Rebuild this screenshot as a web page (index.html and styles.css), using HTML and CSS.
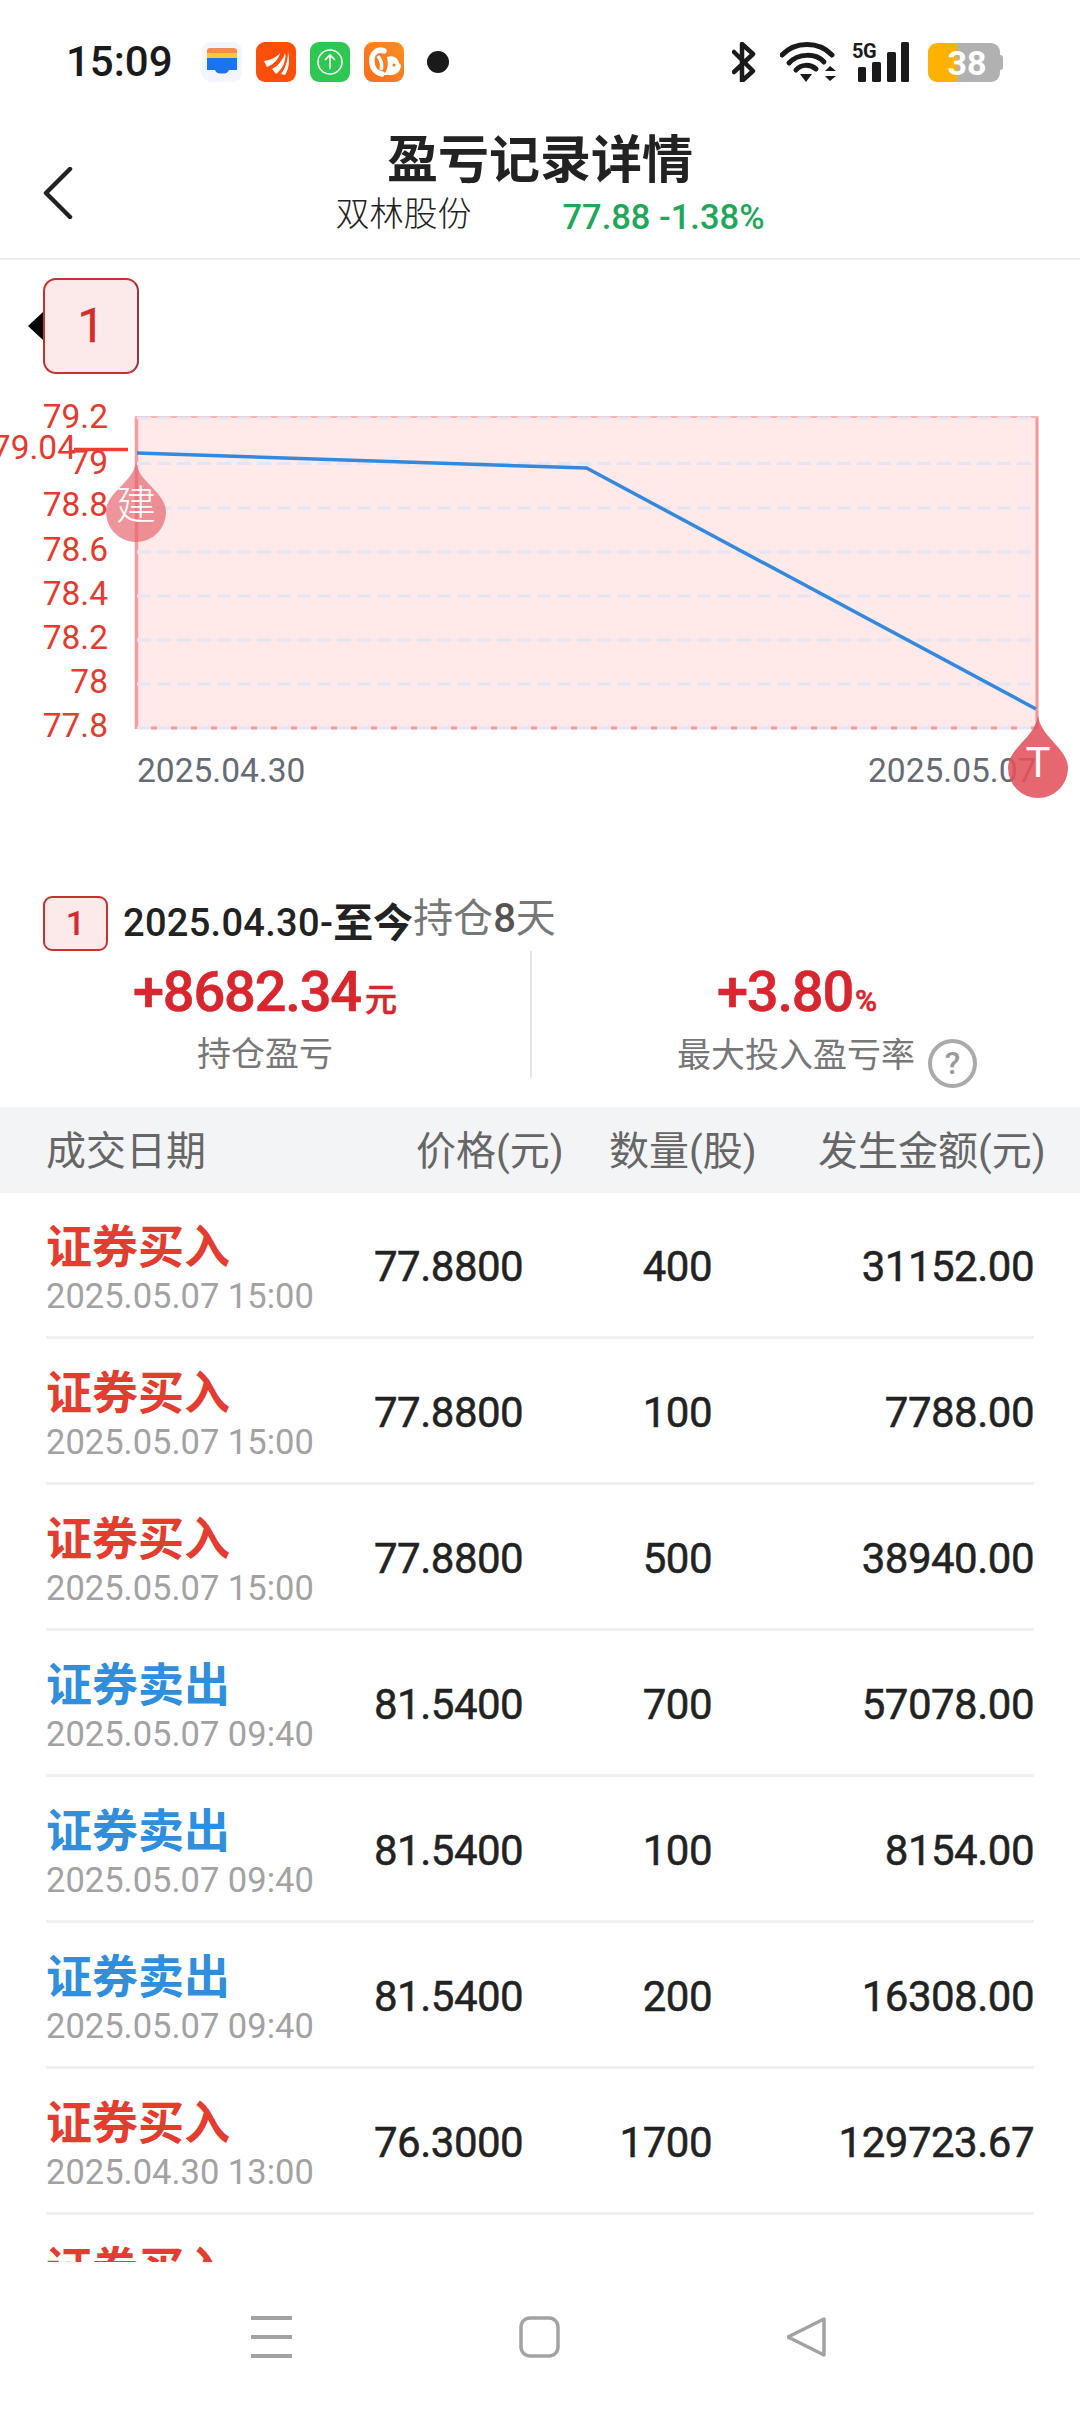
FILE: index.html
```html
<!DOCTYPE html>
<html lang="zh-CN">

<head>
    <meta charset="UTF-8">
    <meta name="viewport" content="width=device-width, initial-scale=1.0">
    <title>盈亏记录详情</title>
    <link rel="stylesheet" href="styles.css">
</head>

<body>
    <div class="page">
        <div class="status-bar">
            <span class="time">15:09</span>
            <div class="app-icons">
                <svg class="app-icon" viewBox="0 0 40 40">
                    <rect width="40" height="40" rx="9" fill="#f2f6fc" />
                    <path d="M5 9a3 3 0 0 1 3-3h24a3 3 0 0 1 3 3v2H5z" fill="#f58b4c" />
                    <rect x="5" y="11" width="30" height="5" fill="#fbc63e" />
                    <path d="M5 16h30v12H27c-1 3-4 3.500-7 3.500S14 31 13 28H5z" fill="#1b74ee" />
                </svg>
                <svg class="app-icon" viewBox="0 0 40 40">
                    <rect width="40" height="40" rx="9" fill="#ff4d0a" />
                    <path d="M8 19c7-1 13-4 16-8-1 6-7 12-13 14z" fill="#fff" />
                    <path d="M16 27c6-3 11-9 13-16 2 7-3 17-9 21z" fill="#fff" />
                    <path d="M25 32c4-5 7-13 7-22 2 8 1 17-3 23z" fill="#fff" />
                </svg>
                <svg class="app-icon" viewBox="0 0 40 40">
                    <rect width="40" height="40" rx="9" fill="#2ec752" />
                    <circle cx="20" cy="20" r="12" fill="none" stroke="#fff" stroke-width="1.600" />
                    <path d="M20 27V13M15 18l5-5 5 5" fill="none" stroke="#fff" stroke-width="1.600" />
                </svg>
                <svg class="app-icon" viewBox="0 0 40 40">
                    <defs>
                        <linearGradient id="ucBg" x1="0" y1="1" x2="1" y2="0">
                            <stop offset="0" stop-color="#fb6c1c" />
                            <stop offset="1" stop-color="#fb8e22" />
                        </linearGradient>
                    </defs>
                    <rect width="40" height="40" rx="9" fill="url(#ucBg)" />
                    <path d="M20 9C13 6 7 12 8 20c0 7 5 11 10 12" fill="none" stroke="#fff" stroke-width="5.500" stroke-linecap="round" />
                    <path d="M14 14c3 4 5 8 3 14" fill="none" stroke="#fff" stroke-width="3.500" />
                    <path d="M23 15c6-2 11 1 12 6l2 2c0 7-6 11-13 10h-5c4-3 6-10 4-18z" fill="#fff" />
                    <circle cx="30" cy="23" r="1.500" fill="#fb7a1c" />
                </svg>
                <span class="dot"></span>
            </div>
            <div class="sys-icons">
                <svg class="ic-bluetooth" viewBox="0 0 24 40">
                    <path d="M2 10l19 19-11 10V2l11 10L2 30" fill="none" stroke="#1a1a1a" stroke-width="4.500" stroke-linejoin="round" stroke-linecap="round" />
                </svg>
                <svg class="ic-wifi" viewBox="0 0 56 40">
                    <path d="M2 13C15 -1 39 -1 52 13" fill="none" stroke="#1a1a1a" stroke-width="5" stroke-linecap="round" />
                    <path d="M9 21C18 11 36 11 44 20" fill="none" stroke="#1a1a1a" stroke-width="5" stroke-linecap="round" />
                    <path d="M16 28C21 22 30 22 36 27" fill="none" stroke="#1a1a1a" stroke-width="5" stroke-linecap="round" />
                    <path d="M20 32h12l-6 8z" fill="#1a1a1a" />
                    <path d="M45 29l5-5 6 5zM45 34h11l-6 5z" fill="#1a1a1a" />
                </svg>
                <svg class="ic-signal" viewBox="0 0 58 40">
                    <text x="0" y="16" class="five-g">5G</text>
                    <rect x="6" y="25" width="8" height="15" rx="1.500" fill="#1a1a1a" />
                    <rect x="20" y="20" width="9" height="20" rx="1.500" fill="#1a1a1a" />
                    <rect x="35" y="10" width="9" height="30" rx="1.500" fill="#1a1a1a" />
                    <rect x="49" y="0" width="8" height="40" rx="1.500" fill="#1a1a1a" />
                </svg>
                <div class="battery">
                    <span class="battery-num">38</span>
                </div>
            </div>
        </div>

        <div class="header">
            <div class="back">
                <svg viewBox="0 0 30 52" width="30" height="52">
                    <path d="M27 2L3 26l24 24" fill="none" stroke="#222" stroke-width="4.500" stroke-linecap="round" stroke-linejoin="round" />
                </svg>
            </div>
            <div class="header-mid">
                <div class="title">盈亏记录详情</div>
                <div class="sub">
                    <span class="stock-name">双林股份</span>
                    <span class="stock-price">77.88 -1.38%</span>
                </div>
            </div>
        </div>

        <div class="chart">
            <div class="pick">1</div>
            <svg class="plot" viewBox="0 374 1080 522" width="1080" height="522">
                <rect x="135" y="416" width="903" height="313" fill="#ffe9e9" />
                <path d="M136.500 416V729" stroke="#fb9c9c" stroke-width="3.500" />
                <path d="M1037 416V729" stroke="#f19896" stroke-width="3" />
                <path d="M135 417H1038" stroke="#f7b4b0" stroke-width="2" />
                <path d="M137 418H1036" class="grid-line" />
                <path d="M137 463.500H1036" class="grid-line" />
                <path d="M137 508H1036" class="grid-line" />
                <path d="M137 552H1036" class="grid-line" />
                <path d="M137 596H1036" class="grid-line" />
                <path d="M137 640H1036" class="grid-line" />
                <path d="M137 684H1036" class="grid-line" />
                <path d="M137 728H1036" stroke="#e4e5f2" stroke-width="3" />
                <path d="M151 728H1036" stroke="#f79a92" stroke-width="3" stroke-dasharray="6 14" />

                <path d="M137 453L586.500 468L1036 709" fill="none" stroke="#3389dd" stroke-width="3.500" />

                <g class="y-label">
                    <text x="108" y="428">79.2</text>
                    <text x="108" y="474">79</text>
                    <text x="108" y="516">78.8</text>
                    <text x="108" y="561">78.6</text>
                    <text x="108" y="605">78.4</text>
                    <text x="108" y="649">78.2</text>
                    <text x="108" y="693">78</text>
                    <text x="108" y="737">77.8</text>
                    <text x="76" y="459">79.04</text>
                </g>
                <path d="M74 449.500H128" stroke="#e8412f" stroke-width="3.500" />

                <text class="x-label" x="137" y="782">2025.04.30</text>
                <text class="x-label" x="868" y="782">2025.05.07</text>

                <path d="M136 462C138 482 166 492 166 512A30 30 0 0 1 106 512C106 492 134 482 136 462Z" fill="#e4636b" opacity="0.68" />
                <text class="drop-text" x="136" y="519">建</text>
                <path d="M1038 715C1040 737 1068 748 1068 768A30 30 0 0 1 1008 768C1008 748 1036 737 1038 715Z" fill="#e2525b" opacity="0.88" />
                <text class="drop-text drop-t" x="1038" y="777">T</text>
            </svg>
        </div>

        <div class="period">
            <span class="period-badge">1</span>
            <span class="period-date">2025.04.30-</span><span class="period-now">至今</span><span class="period-hold">持仓<b class="period-num">8</b>天</span>
        </div>

        <div class="stats">
            <div class="stat stat-left">
                <div class="stat-value">+8682.34<span class="stat-unit">元</span></div>
                <div class="stat-label">持仓盈亏</div>
            </div>
            <div class="stat stat-right">
                <div class="stat-value">+3.80<span class="stat-unit pct">%</span></div>
                <div class="stat-label label-help">最大投入盈亏率<span class="help">?</span></div>
            </div>
        </div>

        <div class="table-head">
            <span>成交日期</span>
            <span>价格(元)</span>
            <span>数量(股)</span>
            <span>发生金额(元)</span>
        </div>

        <div class="list">
            <div class="row">
                <div class="row-name">
                    <div class="trade buy">证券买入</div>
                    <div class="trade-time">2025.05.07 15:00</div>
                </div>
                <div class="price">77.8800</div>
                <div class="qty">400</div>
                <div class="amount">31152.00</div>
            </div>
            <div class="row">
                <div class="row-name">
                    <div class="trade buy">证券买入</div>
                    <div class="trade-time">2025.05.07 15:00</div>
                </div>
                <div class="price">77.8800</div>
                <div class="qty">100</div>
                <div class="amount">7788.00</div>
            </div>
            <div class="row">
                <div class="row-name">
                    <div class="trade buy">证券买入</div>
                    <div class="trade-time">2025.05.07 15:00</div>
                </div>
                <div class="price">77.8800</div>
                <div class="qty">500</div>
                <div class="amount">38940.00</div>
            </div>
            <div class="row">
                <div class="row-name">
                    <div class="trade sell">证券卖出</div>
                    <div class="trade-time">2025.05.07 09:40</div>
                </div>
                <div class="price">81.5400</div>
                <div class="qty">700</div>
                <div class="amount">57078.00</div>
            </div>
            <div class="row">
                <div class="row-name">
                    <div class="trade sell">证券卖出</div>
                    <div class="trade-time">2025.05.07 09:40</div>
                </div>
                <div class="price">81.5400</div>
                <div class="qty">100</div>
                <div class="amount">8154.00</div>
            </div>
            <div class="row">
                <div class="row-name">
                    <div class="trade sell">证券卖出</div>
                    <div class="trade-time">2025.05.07 09:40</div>
                </div>
                <div class="price">81.5400</div>
                <div class="qty">200</div>
                <div class="amount">16308.00</div>
            </div>
            <div class="row">
                <div class="row-name">
                    <div class="trade buy">证券买入</div>
                    <div class="trade-time">2025.04.30 13:00</div>
                </div>
                <div class="price">76.3000</div>
                <div class="qty">1700</div>
                <div class="amount">129723.67</div>
            </div>
            <div class="row">
                <div class="row-name">
                    <div class="trade buy">证券买入</div>
                </div>
            </div>
        </div>

        <div class="nav-bar">
            <svg viewBox="0 0 41 42" width="41" height="42">
                <path d="M0 2H41M0 21H41M0 40H41" stroke="#a3a3a3" stroke-width="4" />
            </svg>
            <svg viewBox="0 0 41 42" width="41" height="42">
                <rect x="2" y="2" width="37" height="38" rx="9" fill="none" stroke="#a3a3a3" stroke-width="3.500" />
            </svg>
            <svg viewBox="0 0 41 42" width="41" height="42">
                <path d="M37 3V39L1 21Z" fill="none" stroke="#a3a3a3" stroke-width="3.500" stroke-linejoin="round" />
            </svg>
        </div>
    </div>
</body>

</html>
```

FILE: styles.css
```css
* {
    margin: 0;
    padding: 0;
    box-sizing: border-box;
}

body {
    background: #fff;
    font-family: Roboto, "Noto Sans CJK SC", sans-serif;
    color: #222;
}

.page {
    width: 1080px;
    height: 2412px;
    display: flex;
    flex-direction: column;
    overflow: hidden;
    background: #fff;
}

/* status bar */
.status-bar {
    height: 122px;
    padding: 42px 0 0 66px;
    display: flex;
    align-items: flex-start;
}

.time {
    width: 136px;
    font-size: 42px;
    font-weight: 500;
    line-height: 40px;
    color: #1a1a1a;
}

.app-icons {
    display: flex;
    align-items: center;
    gap: 14px;
}

.app-icon {
    width: 40px;
    height: 40px;
}

.dot {
    width: 22px;
    height: 22px;
    margin-left: 9px;
    border-radius: 50%;
    background: #1a1a1a;
}

.sys-icons {
    margin-left: 283px;
    display: flex;
    align-items: flex-start;
}

.ic-bluetooth {
    width: 24px;
    height: 40px;
}

.ic-wifi {
    width: 56px;
    height: 40px;
    margin-left: 24px;
}

.ic-signal {
    width: 58px;
    height: 40px;
    margin-left: 16px;
    overflow: visible;
}

.five-g {
    font-family: Roboto, sans-serif;
    font-size: 20px;
    font-weight: 700;
    fill: #1a1a1a;
    letter-spacing: -0.5px;
}

.battery {
    position: relative;
    width: 72px;
    height: 39px;
    margin: 1px 0 0 18px;
    border-radius: 9px;
    background: linear-gradient(to right, #fdb100 40%, #b1b1b1 40%);
    display: flex;
    align-items: center;
    justify-content: center;
}

.battery::after {
    content: "";
    position: absolute;
    right: -3px;
    top: 12px;
    width: 3px;
    height: 15px;
    border-radius: 0 3px 3px 0;
    background: #b1b1b1;
}

.battery-num {
    font-size: 34px;
    font-weight: 700;
    color: #fff;
    padding-left: 6px;
}

/* header */
.header {
    height: 138px;
    border-bottom: 2px solid #ececec;
    display: grid;
    grid-template-columns: 140px 800px 140px;
}

.back {
    padding: 45px 0 0 43px;
}

.header-mid {
    display: flex;
    flex-direction: column;
    align-items: center;
}

.title {
    margin-top: 7px;
    font-size: 51px;
    font-weight: 700;
    line-height: 64px;
    color: #222;
}

.sub {
    display: flex;
    align-items: center;
    gap: 91px;
    padding-left: 20px;
    height: 40px;
    margin-top: 1px;
}

.stock-name {
    font-size: 34px;
    font-weight: 300;
    line-height: 40px;
    color: #222;
}

.stock-price {
    font-size: 34.500px;
    font-weight: 500;
    line-height: 40px;
    margin-top: 5px;
    color: #1fa85a;
}

/* chart */
.chart {
    position: relative;
    height: 636px;
    padding-top: 18px;
}

.pick {
    position: relative;
    width: 96px;
    height: 96px;
    margin-left: 43px;
    border: 2.500px solid #c8302f;
    border-right-color: #8f3b3b;
    border-radius: 13px;
    background: #fce9ea;
    color: #d42c2e;
    font-size: 48px;
    line-height: 92px;
    text-align: center;
    -webkit-text-stroke: 0.500px #d42c2e;
}

.pick::before {
    content: "";
    position: absolute;
    left: -17px;
    top: 32px;
    border-top: 14px solid transparent;
    border-bottom: 14px solid transparent;
    border-right: 15px solid #000;
}

.plot {
    display: block;
}

.grid-line {
    stroke: #e2e5f3;
    stroke-width: 3;
    stroke-dasharray: 14 6;
}

.y-label text {
    font-family: Roboto, sans-serif;
    font-size: 33.500px;
    fill: #e53a2e;
    text-anchor: end;
}

.x-label {
    font-family: Roboto, sans-serif;
    font-size: 33.500px;
    fill: #666b73;
}

.drop-text {
    font-family: "Noto Sans CJK SC", Roboto, sans-serif;
    font-size: 40px;
    font-weight: 300;
    fill: #fff;
    text-anchor: middle;
}

.drop-t {
    font-family: Roboto, sans-serif;
    font-size: 42px;
    font-weight: 400;
}

/* period + stats */
.period {
    height: 55px;
    padding-left: 43px;
    display: flex;
    align-items: center;
}

.period-badge {
    width: 65px;
    height: 55px;
    margin-right: 15px;
    border: 2px solid #c8302f;
    border-radius: 9px;
    background: #fce9ea;
    color: #d42c2e;
    font-size: 34px;
    font-weight: 500;
    line-height: 50px;
    text-align: center;
}

.period-date {
    font-size: 38px;
    font-weight: 500;
    line-height: 55px;
    letter-spacing: 0.300px;
    color: #222;
}

.period-now {
    font-size: 40px;
    font-weight: 700;
    line-height: 55px;
    color: #222;
}

.period-hold {
    font-size: 40px;
    font-weight: 400;
    line-height: 48px;
    margin-bottom: 9px;
    color: #777;
}

.period-num {
    font-weight: 500;
    color: #555;
}

.stats {
    height: 127px;
    display: grid;
    grid-template-columns: 530px 550px;
    grid-template-rows: 127px;
}

.stat {
    text-align: center;
}

.stat-right {
    border-left: 2px solid #e6e6e6;
}

.stat-value {
    margin-top: 8px;
    font-size: 56px;
    font-weight: 500;
    line-height: 66px;
    letter-spacing: -1.200px;
    color: #d8262f;
    -webkit-text-stroke: 0.600px #d8262f;
}

.stat-right .stat-value {
    padding-right: 18px;
}

.stat-unit {
    margin-left: 4px;
    font-size: 32px;
    letter-spacing: 0;
}

.stat-unit.pct {
    margin-left: 2px;
    font-size: 30px;
}

.stat-label {
    margin-top: -2px;
    font-size: 34px;
    font-weight: 400;
    line-height: 46px;
    color: #777;
}

.label-help {
    display: flex;
    justify-content: center;
    align-items: flex-start;
    padding-left: 42px;
}

.help {
    flex: none;
    width: 49px;
    height: 49px;
    margin: 7px 0 0 13px;
    border: 4px solid #aaa;
    border-radius: 50%;
    color: #999;
    font-family: Roboto, sans-serif;
    font-size: 32px;
    font-weight: 500;
    line-height: 41px;
    text-align: center;
}

/* table */
.table-head {
    height: 86px;
    margin-top: 29px;
    padding-left: 46px;
    padding-bottom: 4px;
    background: #f3f4f6;
    display: grid;
    grid-template-columns: 370px 193px 209px 1fr;
    align-items: center;
    font-size: 40px;
    font-weight: 400;
    color: #666;
}

.list {
    flex: 1;
    overflow: hidden;
}

.row {
    height: 146px;
    margin: 0 46px;
    border-bottom: 3px solid #f0f0f0;
    display: grid;
    grid-template-columns: 328px 201px 137px 322px;
    align-items: center;
    padding-top: 4px;
    font-size: 42px;
    font-weight: 400;
    letter-spacing: -0.500px;
    color: #222;
    -webkit-text-stroke: 0.500px #222;
}

.row-name {
    align-self: start;
    padding-top: 20px;
    letter-spacing: 0;
    -webkit-text-stroke: 0;
}

.trade {
    font-size: 46px;
    font-weight: 700;
    line-height: 60px;
}

.buy {
    color: #e53c30;
}

.sell {
    color: #2f8fdd;
}

.trade-time {
    font-size: 34.500px;
    font-weight: 400;
    line-height: 38px;
    color: #a2a2a2;
}

.qty,
.amount {
    text-align: right;
}

/* nav */
.nav-bar {
    height: 150px;
    padding: 54px 0 0 251px;
    display: flex;
    align-items: flex-start;
    gap: 227px;
    background: #fff;
}
```
